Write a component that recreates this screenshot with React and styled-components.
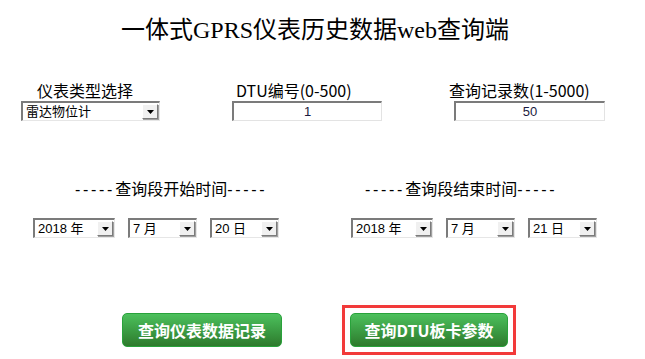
import React from "react";
import styled, { createGlobalStyle } from "styled-components";

const GlobalStyle = createGlobalStyle`
  body {
    margin: 0;
    background: #fff;
    font-family: "Noto Sans CJK SC", sans-serif;
    color: #000;
  }
`;

const startDate = { year: "2018 年", month: "7 月", day: "20 日" };
const endDate = { year: "2018 年", month: "7 月", day: "21 日" };

const Arrow = () => (
  <svg width="7" height="4" viewBox="0 0 7 4">
    <path d="M0 0h7L3.5 4z" fill="#000" />
  </svg>
);

const FakeSelect = ({ value, width }) => (
  <SelectBox $w={width}>
    <SelectValue>{value}</SelectValue>
    <ArrowButton>
      <Arrow />
    </ArrowButton>
  </SelectBox>
);

const Head = ({ text, offset }) => (
  <SectionHead $offset={offset}>
    <Dashes>-----</Dashes>
    {text}
    <Dashes>-----</Dashes>
  </SectionHead>
);

class App extends React.Component {
  render() {
    return (
      <Page>
        <GlobalStyle />
        <Title>一体式GPRS仪表历史数据web查询端</Title>

        <TopRow>
          <Field>
            <Label $offset={16}>仪表类型选择</Label>
            <FakeSelect value="雷达物位计" width={139} />
          </Field>
          <Field>
            <Label $offset={4}>DTU编号(0-500)</Label>
            <TextInput $w={150} defaultValue="1" />
          </Field>
          <Field>
            <Label $offset={-5}>查询记录数(1-5000)</Label>
            <TextInput $w={151} defaultValue="50" />
          </Field>
        </TopRow>

        <DateSection>
          <DateGroup>
            <Head offset={42} text="查询段开始时间" />
            <DateRow>
              <FakeSelect value={startDate.year} width={82} />
              <FakeSelect value={startDate.month} width={69} />
              <FakeSelect value={startDate.day} width={69} />
            </DateRow>
          </DateGroup>
          <DateGroup>
            <Head offset={14} text="查询段结束时间" />
            <DateRow>
              <FakeSelect value={endDate.year} width={82} />
              <FakeSelect value={endDate.month} width={69} />
              <FakeSelect value={endDate.day} width={69} />
            </DateRow>
          </DateGroup>
        </DateSection>

        <ButtonRow>
          <GreenButton $w={160}>查询仪表数据记录</GreenButton>
          <Marker>
            <GreenButton $w={158}>查询DTU板卡参数</GreenButton>
          </Marker>
        </ButtonRow>
      </Page>
    );
  }
}
export default App;

const Page = styled.div`
  width: 630px;
  height: 359px;
  overflow: hidden;
`;

const Title = styled.h1`
  margin: 13px 0 0;
  text-align: center;
  font-family: "Liberation Serif", "Noto Sans CJK SC", serif;
  font-weight: normal;
  font-size: 24px;
  line-height: 34px;
  color: #000;
`;

const TopRow = styled.div`
  display: flex;
  gap: 72px;
  padding-left: 21px;
  margin-top: 33px;
`;

const Field = styled.div`
  display: flex;
  flex-direction: column;
  gap: 1px;
`;

const Label = styled.div`
  margin-left: ${p => p.$offset}px;
  font-size: 16px;
  line-height: 20px;
  white-space: nowrap;
  color: #000;
`;

const SelectBox = styled.div`
  display: flex;
  box-sizing: border-box;
  width: ${p => p.$w}px;
  height: 20px;
  background: #fff;
  border-style: solid;
  border-width: 2px 1px 1px 2px;
  border-color: #7b7b7b #e6e6e6 #e6e6e6 #7b7b7b;
`;

const SelectValue = styled.div`
  flex: 1;
  padding-left: 3px;
  font-family: "Liberation Sans", "Noto Sans CJK SC", sans-serif;
  font-size: 13px;
  line-height: 17px;
  white-space: nowrap;
  color: #000;
`;

const ArrowButton = styled.div`
  display: flex;
  align-items: center;
  justify-content: center;
  box-sizing: border-box;
  width: 16px;
  margin: 1px;
  background: #f0f0f0;
  border-style: solid;
  border-width: 1px;
  border-color: #fff #7b7b7b #7b7b7b #fff;
  box-shadow: 1px 1px 0 #a0a0a0;
`;

const TextInput = styled.input`
  box-sizing: border-box;
  width: ${p => p.$w}px;
  height: 20px;
  padding: 0;
  text-align: center;
  font-family: "Liberation Sans", sans-serif;
  font-size: 13px;
  color: #1a1a40;
  background: #fff;
  outline: none;
  border-style: solid;
  border-width: 2px 1px 1px 2px;
  border-color: #7b7b7b #e3e3e3 #e3e3e3 #7b7b7b;
`;

const DateSection = styled.div`
  display: flex;
  gap: 72px;
  padding-left: 33px;
  margin-top: 57px;
`;

const DateGroup = styled.div`
  display: flex;
  flex-direction: column;
  gap: 18px;
`;

const SectionHead = styled.div`
  margin-left: ${p => p.$offset}px;
  font-size: 16px;
  line-height: 20px;
  white-space: nowrap;
  color: #000;
`;

const Dashes = styled.span`
  font-family: "Liberation Sans", sans-serif;
  letter-spacing: 2.7px;
`;

const DateRow = styled.div`
  display: flex;
  gap: 13px;
`;

const ButtonRow = styled.div`
  display: flex;
  align-items: center;
  gap: 60px;
  padding-left: 122px;
  margin-top: 67px;
`;

const Marker = styled.div`
  display: flex;
  padding: 5px;
  border: 3px solid #f23a3a;
`;

const GreenButton = styled.button`
  box-sizing: border-box;
  width: ${p => p.$w}px;
  height: 34px;
  padding: 0;
  border: 1px solid #29a23b;
  border-radius: 5px;
  background: linear-gradient(#4cc05c, #3a9a42 55%, #2e7a2c);
  color: #fff;
  font-family: "Noto Sans CJK SC", sans-serif;
  font-weight: bold;
  font-size: 16px;
  cursor: pointer;
`;
